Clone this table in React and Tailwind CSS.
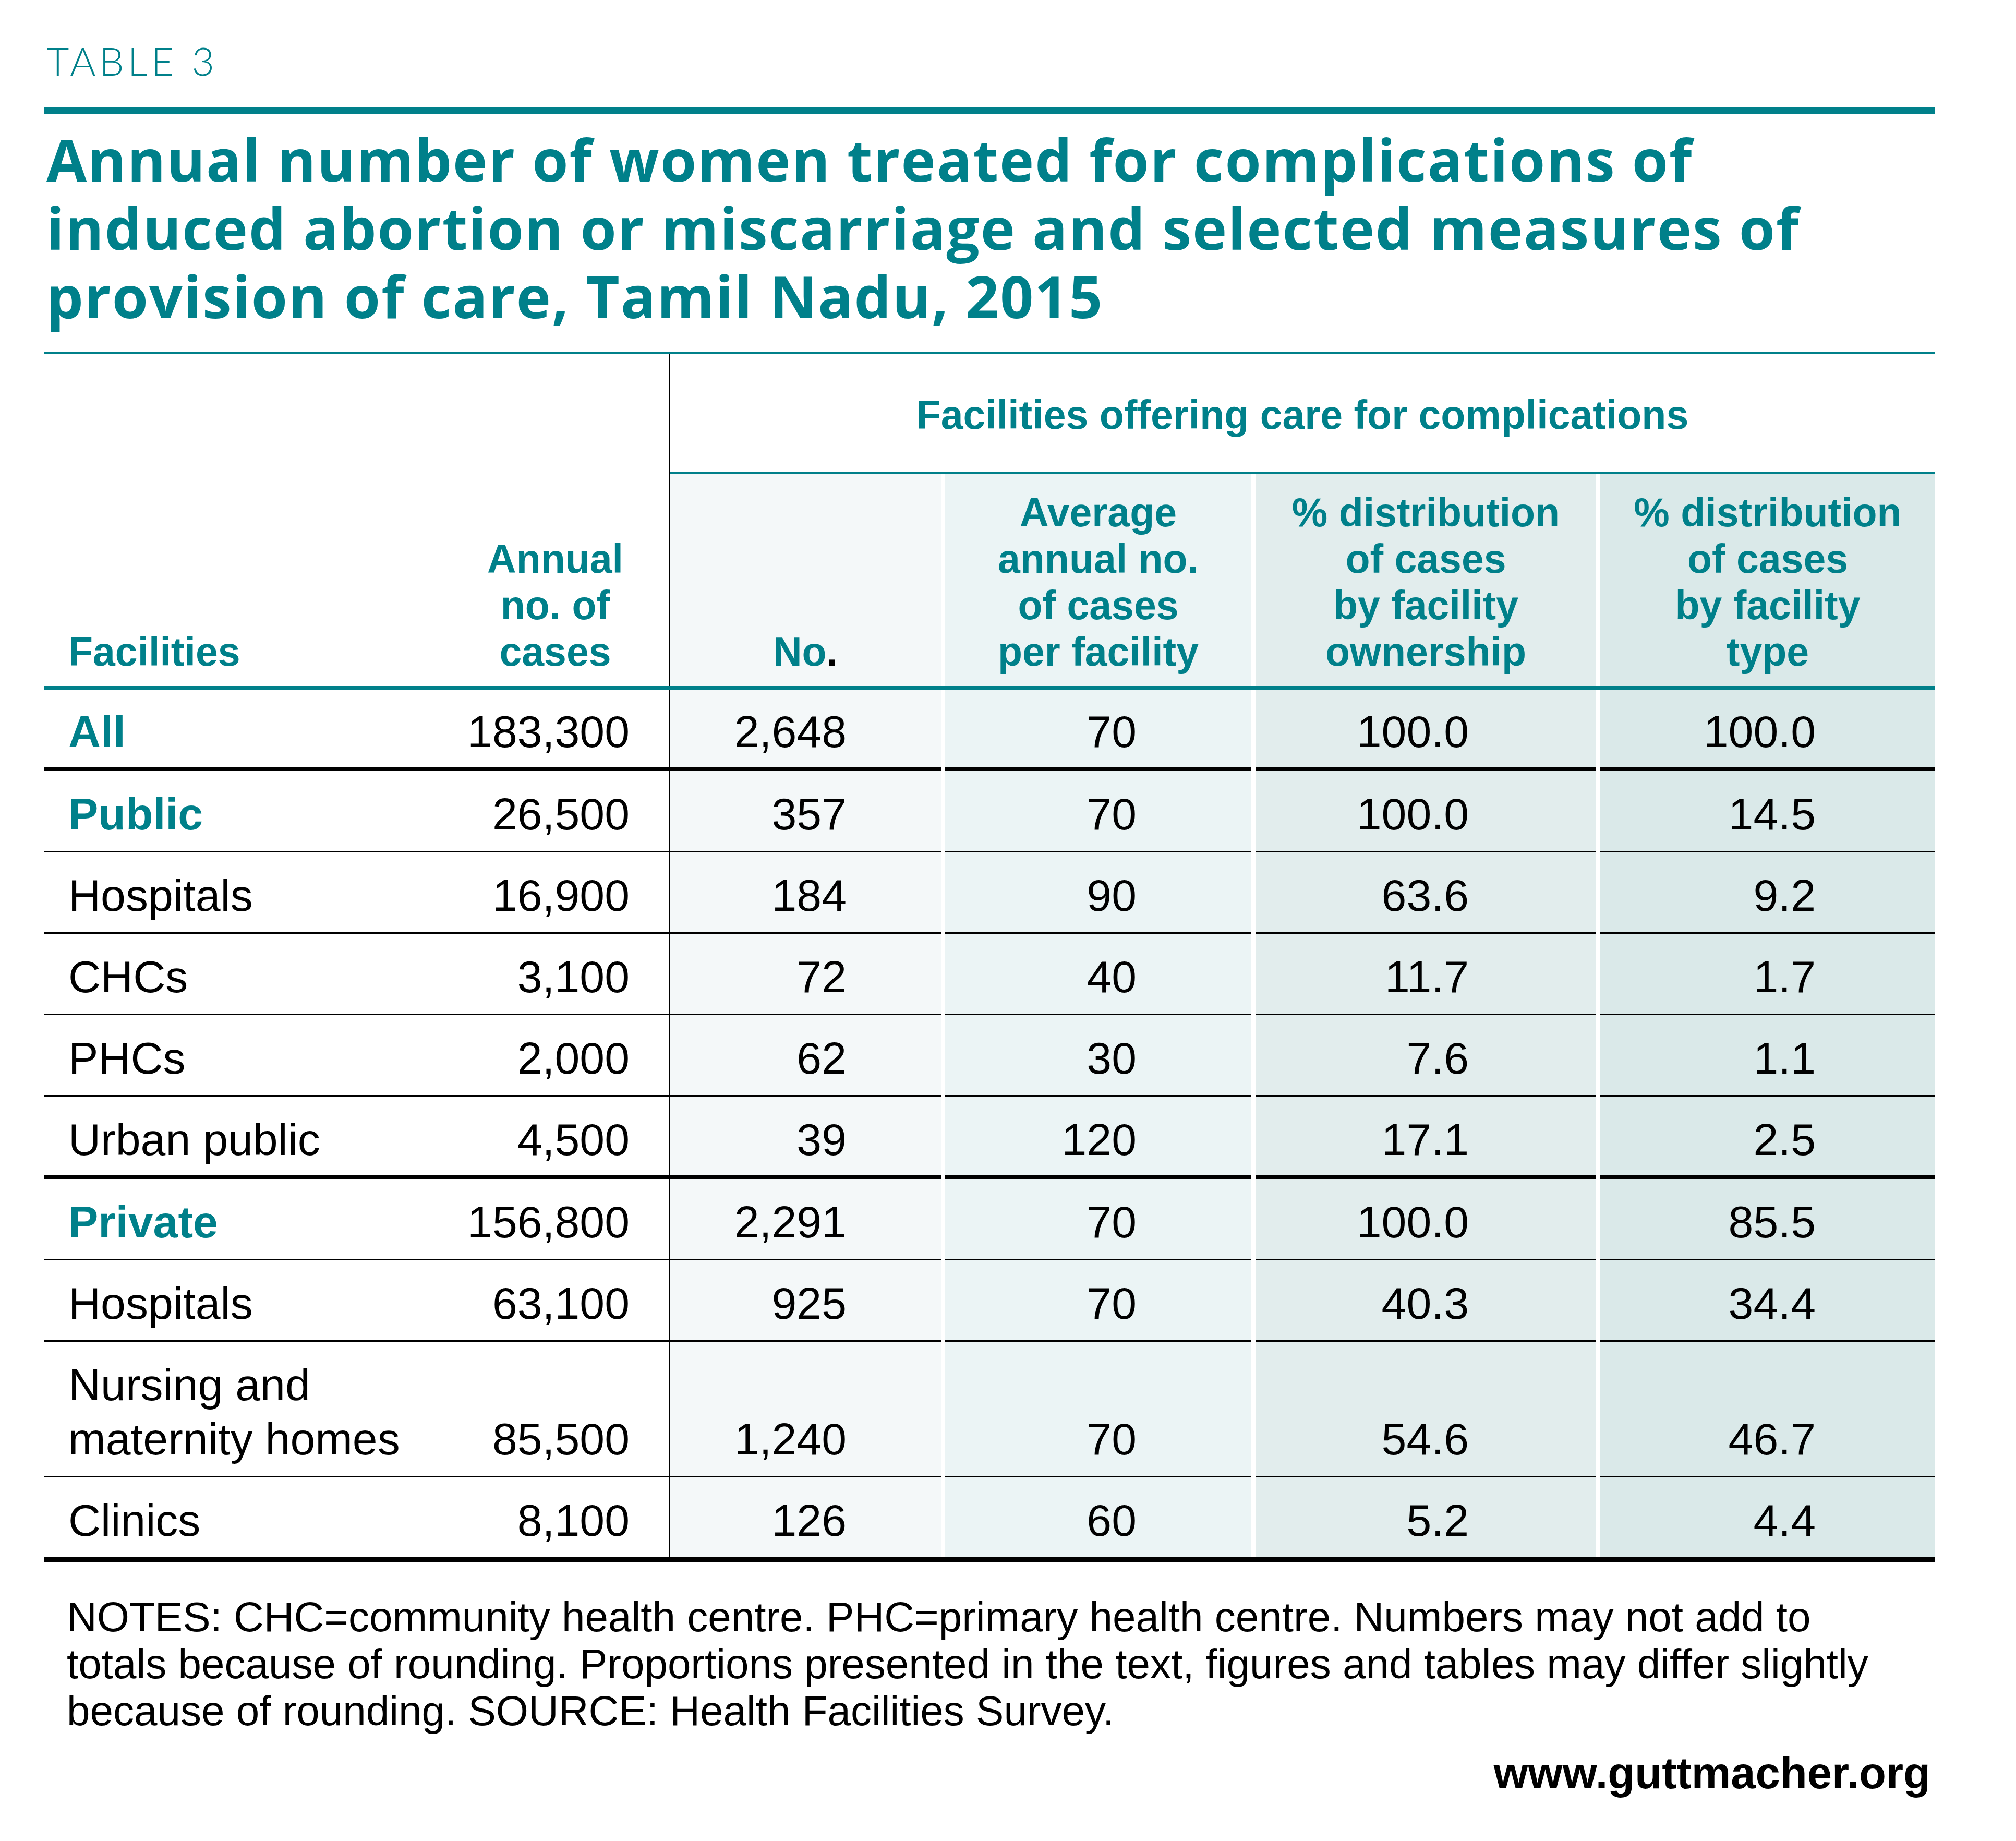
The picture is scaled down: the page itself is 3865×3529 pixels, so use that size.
import React from 'react';

const rows = [
    { label: ['All'], bold: true, annual: '183,300', no: '2,648', avg: '70', own: '100.0', type: '100.0', rule: 'thick', pad: 'pt-[28px] pb-[16px]' },
    { label: ['Public'], bold: true, annual: '26,500', no: '357', avg: '70', own: '100.0', type: '14.5' },
    { label: ['Hospitals'], annual: '16,900', no: '184', avg: '90', own: '63.6', type: '9.2' },
    { label: ['CHCs'], annual: '3,100', no: '72', avg: '40', own: '11.7', type: '1.7' },
    { label: ['PHCs'], annual: '2,000', no: '62', avg: '30', own: '7.6', type: '1.1' },
    { label: ['Urban public'], annual: '4,500', no: '39', avg: '120', own: '17.1', type: '2.5', rule: 'thick', pad: 'pt-[30px] pb-[16px]' },
    { label: ['Private'], bold: true, annual: '156,800', no: '2,291', avg: '70', own: '100.0', type: '85.5' },
    { label: ['Hospitals'], annual: '63,100', no: '925', avg: '70', own: '40.3', type: '34.4' },
    { label: ['Nursing and', 'maternity homes'], annual: '85,500', no: '1,240', avg: '70', own: '54.6', type: '46.7' },
    { label: ['Clinics'], annual: '8,100', no: '126', avg: '60', own: '5.2', type: '4.4', rule: 'none' },
];

const Row = ({ row }) => {
    const pad = row.pad || 'pt-[30px] pb-[19px]';
    const rule = row.rule === 'thick' ? 'border-b-[8px]' : row.rule === 'none' ? 'border-b-0' : 'border-b-[3px]';
    const cell = `flex items-end justify-end ${pad} ${rule} border-black`;
    return (
        <div className="flex text-[86px] leading-[104px] text-black">
            <div className={`flex w-[1199px] border-r-2 ${rule} border-black`}>
                <div className={`flex-1 pl-[46px] ${pad} ${row.bold ? 'font-bold text-[#00808a]' : ''}`}>
                    {row.label.map((l, i) => <div key={i}>{l}</div>)}
                </div>
                <div className={`flex items-end pr-[75px] ${pad}`}>{row.annual}</div>
            </div>
            <div className="flex gap-[8px]">
                <div className={`${cell} w-[520px] bg-[#f4f8f9] pr-[181px]`}>{row.no}</div>
                <div className={`${cell} w-[587px] bg-[#ebf4f5] pr-[220px]`}>{row.avg}</div>
                <div className={`${cell} w-[653px] bg-[#e2eded] pr-[244px]`}>{row.own}</div>
                <div className={`${cell} w-[642px] bg-[#dae9e9] pr-[229px]`}>{row.type}</div>
            </div>
        </div>
    );
};

const HeadCell = ({ w, bg, children }) => (
    <div className={`flex items-end justify-center ${w} ${bg} pb-[21px] text-center`}>
        <div>{children}</div>
    </div>
);

export default function App() {
    return (
        <div className="w-[3865px] h-[3529px] bg-white pl-[85px] pr-[155px] pt-[79px] font-['Liberation_Sans',Arial,sans-serif]">
            <div className="font-['Lato',sans-serif] font-light text-[75px] leading-[75px] tracking-[7px] text-[#00808a] pl-[4px]">TABLE 3</div>
            <div className="mt-[52px] h-[13px] bg-[#00808a]" />
            <h1 className="mt-[20px] pl-[4px] font-['Open_Sans',sans-serif] font-bold text-[112px] leading-[131px] tracking-[2px] text-[#00808a]">
                <div>Annual number of women treated for complications of</div>
                <div>induced abortion or miscarriage and selected measures of</div>
                <div>provision of care, Tamil Nadu, 2015</div>
            </h1>

            <div className="mt-[43px] h-[3px] bg-[#00808a]" />
            <div className="flex text-[77px] leading-[89px] font-bold text-[#00808a]">
                <div className="flex w-[1199px] items-end justify-between border-r-2 border-black pb-[21px]">
                    <div className="pl-[46px]">Facilities</div>
                    <div className="pr-[87px] text-center">Annual<br />no. of<br />cases</div>
                </div>
                <div className="flex flex-col w-[2426px]">
                    <div className="h-[227px] pt-[73px] text-center">Facilities offering care for complications</div>
                    <div className="h-[3px] bg-[#00808a]" />
                    <div className="flex h-[407px] gap-[8px]">
                        <HeadCell w="w-[520px]" bg="bg-[#f4f8f9]">No<span className="text-black">.</span></HeadCell>
                        <HeadCell w="w-[587px]" bg="bg-[#ebf4f5]">Average<br />annual no.<br />of cases<br />per facility</HeadCell>
                        <HeadCell w="w-[653px]" bg="bg-[#e2eded]">% distribution<br />of cases<br />by facility<br />ownership</HeadCell>
                        <HeadCell w="w-[642px]" bg="bg-[#dae9e9]">% distribution<br />of cases<br />by facility<br />type</HeadCell>
                    </div>
                </div>
            </div>
            <div className="h-[7px] bg-[#00808a]" />

            {rows.map((row, i) => <Row key={i} row={row} />)}
            <div className="h-[9px] bg-black" />

            <p className="mt-[61px] pl-[43px] text-[80px] leading-[90px] text-black">
                NOTES: CHC=community health centre. PHC=primary health centre. Numbers may not add to<br />
                totals because of rounding. Proportions presented in the text, figures and tables may differ slightly<br />
                because of rounding. SOURCE: Health Facilities Survey.
            </p>
            <div className="mt-[31px] pr-[9px] text-right text-[85px] leading-[85px] font-bold text-black">www.guttmacher.org</div>
        </div>
    );
}
